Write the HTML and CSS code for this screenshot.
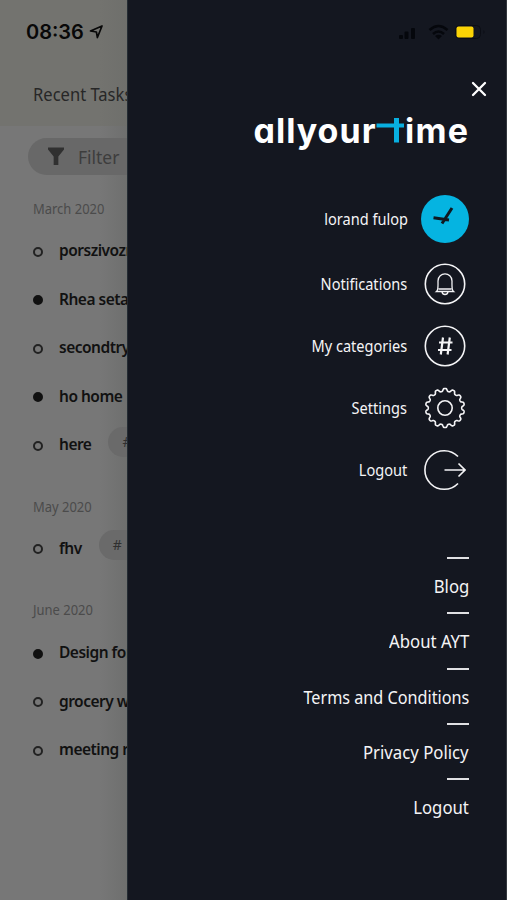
FILE: index.html
```html
<!DOCTYPE html>
<html lang="en">
<head>
<meta charset="utf-8">
<title>Recent Tasks</title>
<link rel="stylesheet" href="styles.css">
</head>
<body>
<div class="screen">
  <main class="tasks">
    <header class="top">
      <div class="clock"><span>08:36</span>
        <svg width="15" height="16" viewBox="0 0 15 16"><path d="M1.500 7 13 2 8.400 13.500 7.400 8Z" fill="none" stroke="#080808" stroke-width="1.700" stroke-linejoin="round"/></svg>
      </div>
      <h1>Recent Tasks</h1>
    </header>
    <div class="filter">
      <svg width="16" height="19" viewBox="0 0 17 19"><path d="M0 0H17V2L11 9.500V18.500H6V9.500L0 2Z" fill="#303030"/></svg>
      <span>Filter</span>
    </div>
    <section class="month march">
      <h2>March 2020</h2>
      <ul>
        <li><i class="dot"></i><b>porszivozni</b></li>
        <li><i class="dot full"></i><b>Rhea setap</b></li>
        <li><i class="dot"></i><b>secondtry</b></li>
        <li><i class="dot full"></i><b>ho home</b></li>
        <li><i class="dot"></i><b>here</b><span class="tag">#</span></li>
      </ul>
    </section>
    <section class="month may">
      <h2>May 2020</h2>
      <ul><li><i class="dot"></i><b>fhv</b><span class="tag">#</span></li></ul>
    </section>
    <section class="month june">
      <h2>June 2020</h2>
      <ul>
        <li><i class="dot full"></i><b>Design for</b></li>
        <li><i class="dot"></i><b>grocery w</b></li>
        <li><i class="dot"></i><b>meeting r</b></li>
      </ul>
    </section>
  </main>
  <aside class="drawer">
    <div class="status">
      <svg width="90" height="18" viewBox="0 0 90 18">
        <g fill="#05070c"><rect x="0" y="12" width="4" height="4" rx="1"/><rect x="5.500" y="8.500" width="4" height="7.500" rx="1"/><rect x="12" y="5" width="4" height="11" rx="1"/></g>
        <g fill="none" stroke="#05070c" stroke-width="2.600"><path d="M30.500 7Q39.500 -1 48.500 7M34 11Q39.500 6 45 11"/></g>
        <path d="M36 13Q39.500 10.500 43 13L39.500 16.500Z" fill="#05070c"/>
        <rect x="56.500" y="2.500" width="25" height="13" rx="4" fill="none" stroke="#0b0d14"/>
        <rect x="57.500" y="3.500" width="17" height="11" rx="2" fill="#fcd405"/>
        <path d="M84.500 7Q86.500 9 84.500 11" fill="#0b0d14"/>
      </svg>
    </div>
    <div class="close"><svg width="16" height="16" viewBox="0 0 16 16"><path d="M2 2 14 14M14 2 2 14" stroke="#fff" stroke-width="2.300" stroke-linecap="round"/></svg></div>
    <div class="logo">
      <svg width="218" height="40" viewBox="0 0 218 40">
        <g class="word"><text x="3.500" y="31.500" textLength="122">allyour</text><text x="155" y="31.500" textLength="63">ime</text></g>
        <path d="M126.500 14.500H154" stroke="#08afe0" stroke-width="4"/><path d="M146.500 7V31.500" stroke="#08afe0" stroke-width="5"/>
      </svg>
    </div>
    <nav class="menu">
      <a class="user"><span>lorand fulop</span>
        <svg width="48" height="48" viewBox="0 0 48 48"><circle cx="24" cy="24" r="24" fill="#05b4e1"/><path d="M12.500 22.800 28 25M21 28.500 31 13" stroke="#101820" stroke-width="3"/></svg></a>
      <a><span>Notifications</span>
        <svg width="42" height="42" viewBox="0 0 42 42"><circle cx="21" cy="21" r="19.700"/><path class="thin" d="M12.500 28.500C14.500 27 14 23 14 18C14 8.500 28 8.500 28 18C28 23 27.500 27 29.500 28.500ZM14.500 26H27.500M18 29Q18.500 31.500 21 31.500T24 29"/></svg></a>
      <a><span>My categories</span>
        <svg width="42" height="42" viewBox="0 0 42 42"><circle cx="21" cy="21" r="19.700"/><path class="bold" d="M19 12.500 16.800 29.500M25.800 12.500 23.600 29.500M15 17.500H28.500M14 25H27.500"/></svg></a>
      <a><span>Settings</span>
        <svg width="42" height="42" viewBox="0 0 42 42"><circle cx="21" cy="21" r="7.200"/><path id="gear" d=""/></svg></a>
      <a><span>Logout</span>
        <svg width="42" height="42" viewBox="0 0 42 42"><path d="M34 7.500A19.300 19.300 0 1 0 34 34.500M20.500 21H40.500M34.500 14.500 41 21 34.500 27.500"/></svg></a>
    </nav>
    <nav class="links">
      <a><span>Blog</span></a>
      <a><span>About AYT</span></a>
      <a class="terms"><span>Terms and Conditions</span></a>
      <a><span>Privacy Policy</span></a>
      <a><span>Logout</span></a>
    </nav>
  </aside>
</div>
<script src="gear.js"></script>
</body>
</html>
```
FILE: styles.css
```css
* { box-sizing: border-box; }
body { margin: 0; font-family: "Noto Sans", sans-serif; background: #777; }
.screen { display: flex; width: 507px; height: 900px; overflow: hidden; }
h1, h2, ul { margin: 0; padding: 0; font-weight: 400; list-style: none; }
.tasks { width: 127px; height: 900px; overflow: hidden; white-space: nowrap; background: linear-gradient(90deg, rgba(100, 100, 100, 0) 100px, rgba(100, 102, 100, .45)), #777; }
.top { height: 126px; padding: 20px 0 0 26px; background: linear-gradient(90deg, rgba(100, 100, 100, 0) 100px, rgba(100, 102, 100, .3)), #73736f; }
.clock { display: flex; align-items: center; gap: 5px; height: 24px; font: 600 20px/24px Inter, sans-serif; color: #080808; }
h1 { margin: 37px 0 0 7px; font-size: 18px; line-height: 26px; color: #272727; transform: scaleX(.92); transform-origin: left; }
.filter { display: flex; align-items: center; gap: 14px; width: 150px; height: 37px; margin: 12px 0 0 28px; padding-left: 20px; border-radius: 19px; background: #686868; color: #3d3d3d; font-size: 18px; }
.filter span { transform: scaleX(.97); transform-origin: left; }
.month { padding-left: 33px; }
.march { margin-top: 23px; }
.may { margin-top: 27px; }
.june { margin-top: 27px; }
h2 { height: 22px; margin-bottom: 6px; font-size: 13.500px; line-height: 22px; color: #4b4b4b; transform: scaleX(.96); transform-origin: left; }
li { display: flex; align-items: center; height: 48.500px; }
li b { font-weight: 600; font-size: 15.500px; color: #111; letter-spacing: -.5px; }
.june h2 { margin-bottom: 7px; }
.dot { width: 10px; height: 10px; margin: 3px 16px 0 0; flex: none; border: 2px solid #222; border-radius: 50%; }
.full { background: #111; border-color: #111; }
.tag { width: 60px; height: 30px; margin: -5px 0 0 17px; padding-left: 14px; border-radius: 15px; background: #6a6a6a; color: #303030; font-size: 14px; line-height: 30px; flex: none; }
.drawer { display: flex; flex-direction: column; width: 380px; height: 900px; padding-right: 38px; background: #141720; border-left: 1px solid #242c33; border-right: 1px solid #33373d; color: #f4f4f6; }
.drawer svg { display: block; flex: none; }
.status { display: flex; justify-content: flex-end; margin: 23px -21px 0 0; height: 18px; }
.close { display: flex; justify-content: flex-end; margin: 40px -19px 0 0; height: 16px; }
.logo { display: flex; justify-content: flex-end; margin: 14px 0 0; height: 40px; }
.logo svg { overflow: visible; }
.word { fill: #fff; font: 700 34px Inter, sans-serif; font-feature-settings: "cv11"; }
.menu { margin: 44px -1px 0 0; }
.menu a { display: flex; align-items: center; justify-content: flex-end; gap: 17px; height: 62px; padding-right: 3px; font-size: 16px; }
.menu .user { height: 48px; gap: 13px; padding: 0; margin-bottom: 10px; }
.menu a:not(.user) svg { fill: none; stroke: #f4f4f6; stroke-width: 1.600; }
.menu .thin { stroke-width: 1.300; }
.menu .bold { stroke-width: 2.200; }
.menu span { transform: scaleX(.91); transform-origin: right; }
.links { margin: 56px -1px 0 0; }
.links a { display: flex; flex-direction: column; align-items: flex-end; height: 55.300px; font-size: 18px; line-height: 26px; }
.links a::before { content: ""; width: 22px; height: 2px; margin-bottom: 14px; background: #e0e0e3; }
.links span { transform: scaleX(.93); transform-origin: right; }
.links .terms span { transform: scaleX(.9); }
```
FILE: gear.js
```js
const points = [];
for (let i = 0; i <= 280; i++) {
  const a = i / 280 * Math.PI * 2 - Math.PI / 2;
  const wave = Math.cos(a * 14 + Math.PI * 7);
  const r = 18.1 + 1.4 * Math.tanh(wave * 1.8) / Math.tanh(1.8);
  points.push((21 + r * Math.cos(a)).toFixed(2) + " " + (21 + r * Math.sin(a)).toFixed(2));
}
document.getElementById("gear").setAttribute("d", "M" + points.join("L") + "Z");
```
